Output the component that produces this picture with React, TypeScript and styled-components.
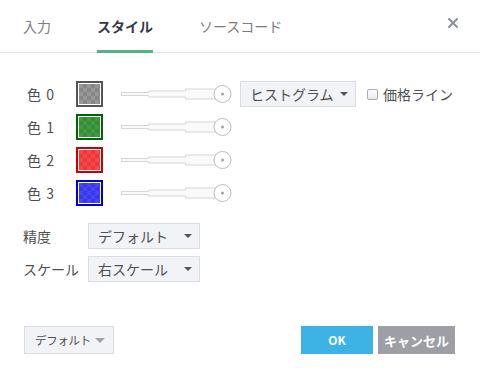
import * as React from 'react';
import styled, { createGlobalStyle } from 'styled-components';

const GlobalStyle = createGlobalStyle`
  html, body {
    margin: 0;
    padding: 0;
    background: #fff;
  }
  body {
    font-family: "Noto Sans CJK JP", "Noto Sans", sans-serif;
    font-size: 14px;
    color: #505050;
  }
`

const Dialog = styled.div`
  width: 480px;
  height: 379px;
  display: flex;
  flex-direction: column;
  box-sizing: border-box;
  overflow: hidden;
`

const Header = styled.div`
  height: 52px;
  display: flex;
  align-items: stretch;
  padding-left: 23px;
  border-bottom: 1px solid #e0e3eb;
`

const Tab = styled.div<{ active?: boolean }>`
  display: flex;
  align-items: center;
  margin-right: 46px;
  margin-bottom: -1px;
  padding-top: 1px;
  font-size: 14px;
  font-weight: ${p => (p.active ? 700 : 400)};
  color: ${p => (p.active ? '#363a45' : '#7a7d83')};
  border-bottom: 3px solid ${p => (p.active ? '#52b383' : 'transparent')};
  box-sizing: border-box;
`

const CloseButton = styled.div`
  margin-left: auto;
  width: 52px;
  display: flex;
  align-items: flex-start;
  justify-content: center;
  padding-top: 18px;
  padding-right: 2px;
  box-sizing: border-box;
`

const Body = styled.div`
  padding: 28px 0 0 23px;
`

const ColorRow = styled.div`
  display: flex;
  align-items: center;
  height: 26px;
  margin-bottom: 7px;
  white-space: nowrap;
  & > * {
    flex-shrink: 0;
  }
`

const ColorLabel = styled.div`
  width: 53px;
  padding-left: 4px;
  box-sizing: border-box;
  font-size: 14px;
  color: #505050;
  letter-spacing: 1px;
`

const Swatch = styled.div<{ border: string }>`
  width: 27px;
  height: 26px;
  box-sizing: border-box;
  border: 2px solid ${p => p.border};
  padding: 1px;
  background: #fff;
`

const SwatchFill = styled.div<{ fill: string }>`
  width: 100%;
  height: 100%;
  background:
    linear-gradient(${p => p.fill}, ${p => p.fill}),
    conic-gradient(#c8c8c8 25%, #ffffff 0 50%, #c8c8c8 0 75%, #ffffff 0) 0 0 / 8px 8px;
`

const SliderSvg = styled.svg`
  margin-left: 18px;
  display: block;
`

const Select = styled.div<{ width: number }>`
  width: ${p => p.width}px;
  height: 26px;
  box-sizing: border-box;
  display: flex;
  align-items: center;
  justify-content: space-between;
  padding: 0 7px 0 9px;
  background: #f1f3f6;
  border: 1px solid #dadde2;
  font-size: 14px;
  color: #505050;
  white-space: nowrap;
  flex-shrink: 0;
`

const Caret = styled.span<{ light?: boolean }>`
  width: 0;
  height: 0;
  border-left: ${p => (p.light ? 5 : 4)}px solid transparent;
  border-right: ${p => (p.light ? 5 : 4)}px solid transparent;
  border-top: ${p => (p.light ? 5 : 4)}px solid ${p => (p.light ? '#a0a3a8' : '#555')};
`

const HistSelect = styled(Select)`
  margin-left: 8px;
`

const CheckLabel = styled.label`
  display: flex;
  align-items: center;
  margin-left: 11px;
  font-size: 14px;
  color: #505050;
`

const CheckBox = styled.span`
  width: 11px;
  height: 11px;
  box-sizing: border-box;
  border: 1px solid #a8acb2;
  border-radius: 2px;
  background: linear-gradient(#fdfdfd, #e8eaed);
  margin-right: 5px;
`

const FieldRow = styled.div<{ first?: boolean }>`
  display: flex;
  align-items: center;
  height: 26px;
  margin-top: ${p => (p.first ? 17 : 7)}px;
`

const FieldLabel = styled.div`
  width: 65px;
  font-size: 14px;
  color: #505050;
  white-space: nowrap;
`

const Footer = styled.div`
  margin-top: auto;
  display: flex;
  align-items: center;
  padding: 0 25px 25px 24px;
`

const FooterSelect = styled(Select)`
  height: 28px;
  padding: 0 8px 0 10px;
  font-size: 11.5px;
  letter-spacing: -0.3px;
`

const Button = styled.div<{ bg: string; width: number }>`
  width: ${p => p.width}px;
  height: 28px;
  display: flex;
  align-items: center;
  justify-content: center;
  background: ${p => p.bg};
  color: #fff;
  font-weight: 700;
  font-size: 13px;
  white-space: nowrap;
`

const OkButton = styled(Button)`
  margin-left: auto;
  font-size: 12px;
  padding-bottom: 2px;
  box-sizing: border-box;
`

const CancelButton = styled(Button)`
  margin-left: 5px;
`

const colors = [
  { label: '色 0', border: '#555555', fill: 'rgba(110,110,110,0.72)' },
  { label: '色 1', border: '#006400', fill: 'rgba(0,120,0,0.74)' },
  { label: '色 2', border: '#cc0000', fill: 'rgba(245,0,0,0.72)' },
  { label: '色 3', border: '#0000cc', fill: 'rgba(0,0,245,0.72)' },
]

const WidthSlider = () => (
  <SliderSvg width="111" height="20" viewBox="0 0 111 20">
    <path
      d="M0.5 8.5 H27.5 V7 H64.5 V5 H96 V15 H64.5 V13 H27.5 V11.5 H0.5 Z"
      fill="#fafafa"
      stroke="#d3d5d8"
      strokeWidth="1"
    />
    <circle cx="101.5" cy="10" r="8.5" fill="#fff" stroke="#b9bdc4" strokeWidth="1" />
    <circle cx="101.5" cy="10" r="1.6" fill="#a0a5ad" />
  </SliderSvg>
)

export default function App() {
  return (
    <Dialog>
      <GlobalStyle />
      <Header>
        <Tab>入力</Tab>
        <Tab active>スタイル</Tab>
        <Tab>ソースコード</Tab>
        <CloseButton>
          <svg width="10" height="10" viewBox="0 0 10 10">
            <path d="M1 1 L9 9 M9 1 L1 9" stroke="#8c9099" strokeWidth="2" strokeLinecap="square" />
          </svg>
        </CloseButton>
      </Header>
      <Body>
        {colors.map((c, i) => (
          <ColorRow key={c.label}>
            <ColorLabel>{c.label}</ColorLabel>
            <Swatch border={c.border}>
              <SwatchFill fill={c.fill} />
            </Swatch>
            <WidthSlider />
            {i === 0 && (
              <>
                <HistSelect width={116}>
                  ヒストグラム <Caret />
                </HistSelect>
                <CheckLabel>
                  <CheckBox />
                  価格ライン
                </CheckLabel>
              </>
            )}
          </ColorRow>
        ))}
        <FieldRow first>
          <FieldLabel>精度</FieldLabel>
          <Select width={112}>
            デフォルト <Caret />
          </Select>
        </FieldRow>
        <FieldRow>
          <FieldLabel>スケール</FieldLabel>
          <Select width={112}>
            右スケール <Caret />
          </Select>
        </FieldRow>
      </Body>
      <Footer>
        <FooterSelect width={90}>
          デフォルト <Caret light />
        </FooterSelect>
        <OkButton bg="#3cb3e4" width={72}>OK</OkButton>
        <CancelButton bg="#9d9fa4" width={77}>キャンセル</CancelButton>
      </Footer>
    </Dialog>
  );
}
